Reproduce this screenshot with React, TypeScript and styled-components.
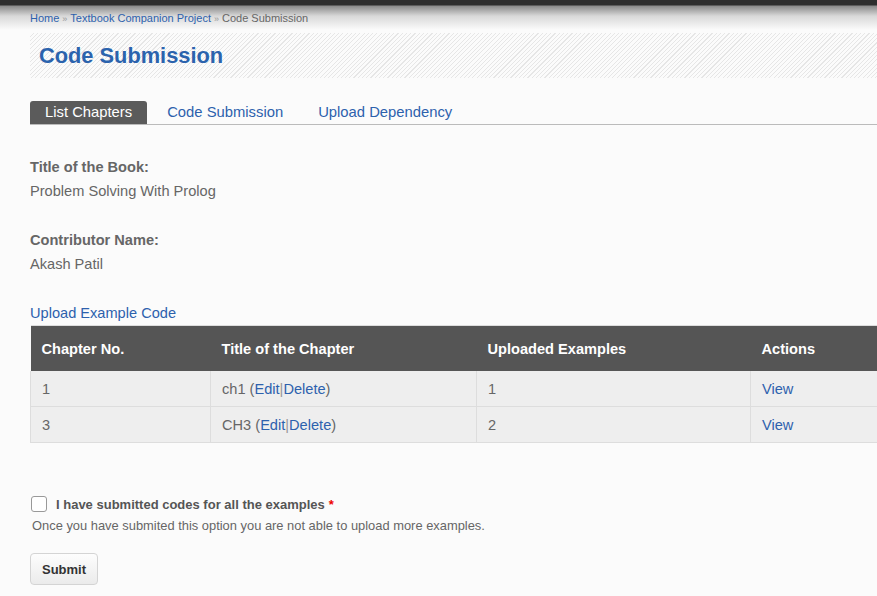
import React from "react";
import styled, { createGlobalStyle } from "styled-components";

const GlobalStyle = createGlobalStyle`
  html, body {
    margin: 0;
    padding: 0;
    background: #fbfbfb;
    overflow-x: hidden;
  }
  body {
    font-family: "Liberation Sans", Arial, Helvetica, sans-serif;
    color: #666;
  }
  a {
    color: #2d61ad;
    text-decoration: none;
  }
`;

const TopBar = styled.div`
  height: 30px;
  background: linear-gradient(
    to bottom,
    #2e2e2e 0px,
    #2e2e2e 5px,
    #8a8a8a 6px,
    #d8d8d8 16px,
    #fbfbfb 30px
  );
  margin-bottom: -20px;
`;

const Page = styled.div`
  position: relative;
  padding-left: 30px;
  width: 920px;
`;

const Breadcrumb = styled.div`
  font-size: 11px;
  line-height: 16px;
  color: #666;
  height: 23px;
`;

const Sep = styled.span`
  color: #999;
  font-size: 9px;
  margin: 0 3px;
`;

const TitleBox = styled.div`
  height: 45px;
  display: flex;
  align-items: center;
  padding-left: 9px;
  background: repeating-linear-gradient(
    135deg,
    #fbfbfb 0px,
    #fbfbfb 2.2px,
    #e6e6e6 2.2px,
    #e6e6e6 3px
  );
`;

const Title = styled.h1`
  margin: 0;
  font-size: 21.8px;
  font-weight: bold;
  color: #2b63ad;
`;

const Tabs = styled.div`
  display: flex;
  margin-top: 23px;
  border-bottom: 1px solid #bbb;
  height: 23px;
`;

const Tab = styled.a<{ active?: boolean }>`
  display: block;
  font-size: 14.8px;
  line-height: 23px;
  padding: 0 15px;
  margin-right: 5px;
  border-radius: 3px 3px 0 0;
  background: ${p => (p.active ? "#5b5b5b" : "transparent")};
  color: ${p => (p.active ? "#fff" : "#2d61ad")};
`;

const Field = styled.div<{ gap: number }>`
  margin-top: ${p => p.gap}px;
  font-size: 14.6px;
  line-height: 24px;
`;

const FieldLabel = styled.div`
  font-weight: bold;
  color: #666;
`;

const UploadLink = styled.a`
  display: block;
  font-size: 14.6px;
  line-height: 20px;
  margin-top: 27px;
  margin-bottom: 2px;
`;

const Table = styled.table`
  border-collapse: collapse;
  table-layout: fixed;
  width: 920px;
  font-size: 14.6px;
`;

/* widths are content widths: column = width + 22px padding */
const Th = styled.th<{ w?: number }>`
  background: #555;
  color: #fff;
  text-align: left;
  font-weight: bold;
  height: 45px;
  padding: 0 11px;
  width: ${p => (p.w ? `${p.w}px` : "auto")};
  border-top: 1px solid #ddd;
`;

const Td = styled.td`
  background: #eee;
  color: #666;
  height: 35px;
  padding: 0 11px;
  border: 1px solid #ddd;
  border-top: none;
`;

const Bar = styled.span`
  color: #999;
`;

const CheckRow = styled.label`
  display: flex;
  align-items: center;
  margin-top: 53px;
  font-size: 13px;
  font-weight: bold;
  color: #555;
`;

const Box = styled.span`
  width: 14px;
  height: 14px;
  border: 1px solid #999;
  border-radius: 3px;
  background: #fff;
  margin-left: 1px;
  margin-right: 9px;
`;

const Required = styled.span`
  color: #e00;
  margin-left: 4px;
`;

const Help = styled.div`
  font-size: 12.9px;
  color: #666;
  margin-top: 6px;
  margin-left: 2px;
`;

const SubmitButton = styled.button`
  margin-top: 20px;
  width: 68px;
  height: 32px;
  font-family: "Liberation Sans", Arial, sans-serif;
  font-size: 13px;
  font-weight: bold;
  color: #333;
  border: 1px solid #d4d4d4;
  border-radius: 4px;
  background: linear-gradient(to bottom, #fdfdfd, #ebebeb);
`;

const chapters = [
  { no: "1", title: "ch1", count: "1" },
  { no: "3", title: "CH3", count: "2" },
];

export default function App() {
  return (
    <>
      <GlobalStyle />
      <TopBar />
      <Page>
        <Breadcrumb>
          <a href="#">Home</a>
          <Sep>»</Sep>
          <a href="#">Textbook Companion Project</a>
          <Sep>»</Sep>
          Code Submission
        </Breadcrumb>
        <TitleBox>
          <Title>Code Submission</Title>
        </TitleBox>
        <Tabs>
          <Tab active>List Chapters</Tab>
          <Tab href="#">Code Submission</Tab>
          <Tab href="#">Upload Dependency</Tab>
        </Tabs>
        <Field gap={30}>
          <FieldLabel>Title of the Book:</FieldLabel>
          Problem Solving With Prolog
        </Field>
        <Field gap={25}>
          <FieldLabel>Contributor Name:</FieldLabel>
          Akash Patil
        </Field>
        <UploadLink href="#">Upload Example Code</UploadLink>
        <Table>
          <thead>
            <tr>
              <Th w={158}>Chapter No.</Th>
              <Th w={244}>Title of the Chapter</Th>
              <Th w={252}>Uploaded Examples</Th>
              <Th>Actions</Th>
            </tr>
          </thead>
          <tbody>
            {chapters.map(c => (
              <tr key={c.no}>
                <Td>{c.no}</Td>
                <Td>
                  {c.title} (<a href="#">Edit</a>
                  <Bar>|</Bar>
                  <a href="#">Delete</a>)
                </Td>
                <Td>{c.count}</Td>
                <Td>
                  <a href="#">View</a>
                </Td>
              </tr>
            ))}
          </tbody>
        </Table>
        <CheckRow>
          <Box />
          I have submitted codes for all the examples
          <Required>*</Required>
        </CheckRow>
        <Help>
          Once you have submited this option you are not able to upload more
          examples.
        </Help>
        <SubmitButton>Submit</SubmitButton>
      </Page>
    </>
  );
}
